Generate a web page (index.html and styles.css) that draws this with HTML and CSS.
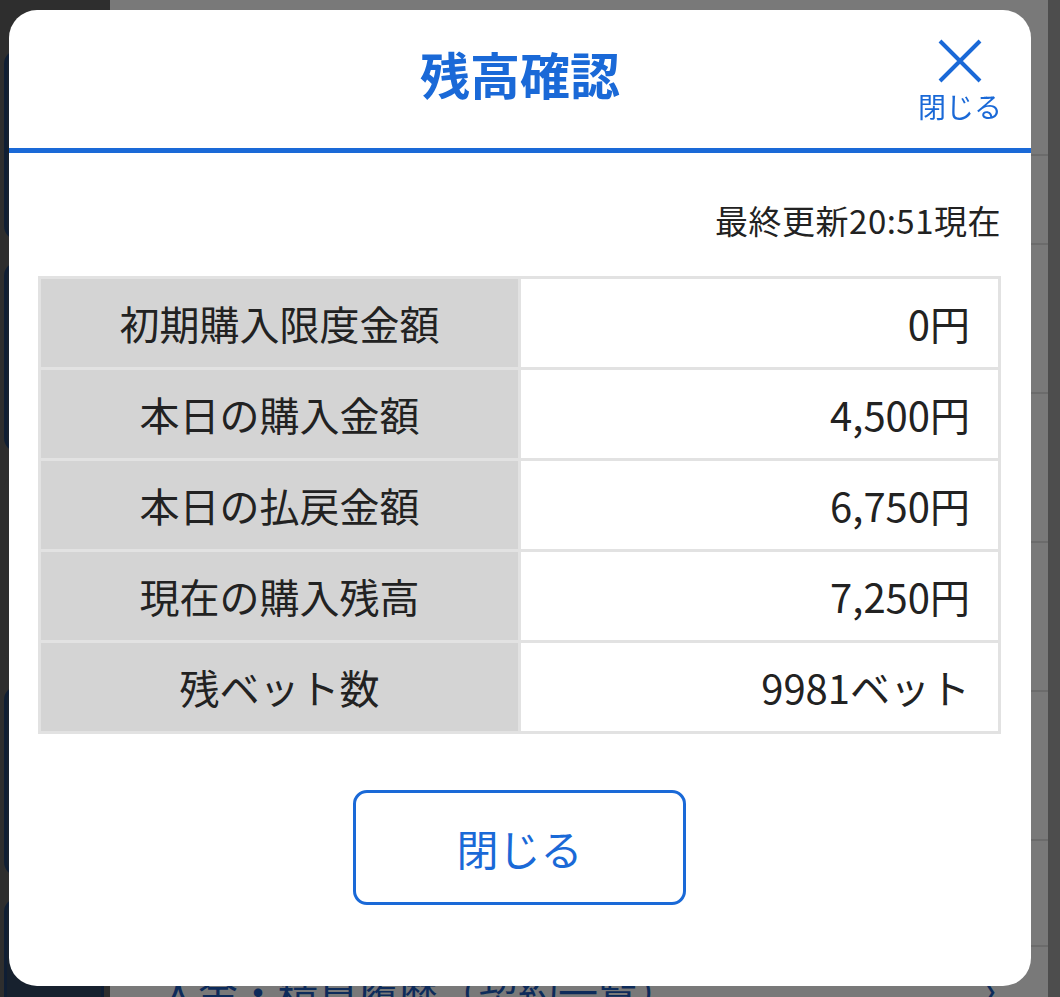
FILE: index.html
```html
<!DOCTYPE html>
<html lang="ja">
<head>
    <meta charset="UTF-8">
    <meta name="viewport" content="width=device-width, initial-scale=1.0">
    <title>残高確認</title>
    <link rel="stylesheet" href="styles.css">
</head>
<body>
    <div class="page">
        <aside class="side">
            <div class="side-btn"></div>
            <div class="side-btn"></div>
            <div class="side-btn plain"></div>
            <div class="side-btn"></div>
            <div class="side-btn"></div>
        </aside>
        <main class="list">
            <div class="list-head"></div>
            <div class="list-row short"></div>
            <div class="list-row"></div>
            <div class="list-row"></div>
            <div class="list-row"></div>
            <div class="list-row"></div>
            <div class="list-row mid"></div>
            <div class="list-row link">
                <span>入金・精算履歴（契約一覧）</span>
                <span class="chev">〉</span>
            </div>
        </main>
        <div class="scroll"></div>
    </div>

    <div class="overlay">
        <section class="modal">
            <header class="modal-head">
                <h1 class="modal-title">残高確認</h1>
                <button class="close-x" type="button">
                    <svg width="44" height="44" viewBox="0 0 44 44">
                        <path d="M2 2 L42 42 M42 2 L2 42" stroke="currentColor" stroke-width="4" fill="none"/>
                    </svg>
                    <span>閉じる</span>
                </button>
            </header>

            <div class="modal-body">
                <p class="updated">最終更新20:51現在</p>

                <table class="balance">
                    <tr>
                        <th>初期購入限度金額</th>
                        <td>0円</td>
                    </tr>
                    <tr>
                        <th>本日の購入金額</th>
                        <td>4,500円</td>
                    </tr>
                    <tr>
                        <th>本日の払戻金額</th>
                        <td>6,750円</td>
                    </tr>
                    <tr>
                        <th>現在の購入残高</th>
                        <td>7,250円</td>
                    </tr>
                    <tr>
                        <th>残ベット数</th>
                        <td>9981ベット</td>
                    </tr>
                </table>

                <button class="close-btn" type="button">閉じる</button>
            </div>
        </section>
    </div>
</body>
</html>
```

FILE: styles.css
```css
* {
    box-sizing: border-box;
}
body {
    margin: 0;
    height: 997px;
    overflow: hidden;
    font-family: "Noto Sans CJK JP", "Noto Sans", sans-serif;
    color: #222;
}

/* page behind the dialog */
.page {
    display: flex;
    height: 100%;
    overflow: hidden;
}
.side {
    width: 110px;
    background: #5c5c5c;
    display: flex;
    flex-direction: column;
    gap: 22px;
    padding: 50px 0 0 4px;
}
.side-btn {
    flex: none;
    width: 100px;
    height: 190px;
    border: 3px solid #1e3d68;
    border-radius: 14px;
    background: #2e435c;
}
.side-btn.plain {
    border-color: transparent;
    background: #5c5c5c;
}
.list {
    flex: 1;
    background: #f2f2f2;
}
.list-head {
    height: 156px;
    border-bottom: 2px solid #d6d6d6;
}
.list-row {
    height: 149px;
    border-bottom: 2px solid #d6d6d6;
}
.list-row.short {
    height: 89px;
}
.list-row.mid {
    height: 106px;
}
.list-row.link {
    display: flex;
    justify-content: space-between;
    align-items: flex-start;
    padding: 20px 30px 0 48px;
    color: #1b56b4;
    font-size: 40px;
    line-height: 1.2;
    border: none;
}
.scroll {
    width: 12px;
    background: #9a9a9a;
}

/* dialog */
.overlay {
    position: fixed;
    inset: 0;
    background: rgba(0, 0, 0, 0.5);
    padding: 10px 29px 0 9px;
}
.modal {
    background: #fff;
    border-radius: 28px;
    padding-bottom: 81px;
}
.modal-head {
    position: relative;
    height: 143px;
    padding-bottom: 12px;
    border-bottom: 5px solid #1a69d7;
    display: flex;
    align-items: center;
    justify-content: center;
}
.modal-title {
    margin: 0;
    font-size: 50px;
    font-weight: bold;
    color: #1a69d7;
    line-height: 1;
}
.close-x {
    position: absolute;
    top: 29px;
    right: 29px;
    display: flex;
    flex-direction: column;
    align-items: center;
    gap: 7px;
    padding: 0;
    border: none;
    background: none;
    color: #1a69d7;
    font-family: inherit;
    font-size: 28px;
    line-height: 32px;
}
.close-x svg {
    display: block;
}
.modal-body {
    padding: 0 30px 0 29px;
    display: flex;
    flex-direction: column;
}
.updated {
    margin: 44px 0 33px;
    height: 46px;
    line-height: 46px;
    text-align: right;
    font-size: 33px;
    letter-spacing: 0.5px;
}
.balance {
    width: 100%;
    border-spacing: 3px;
    background: #e2e2e2;
    table-layout: fixed;
}
.balance th,
.balance td {
    height: 88px;
    padding: 0 28px;
    font-size: 40px;
    font-weight: normal;
}
.balance th {
    background: #d4d4d4;
    text-align: center;
}
.balance td {
    background: #fff;
    text-align: right;
}
.close-btn {
    align-self: center;
    margin-top: 56px;
    width: 333px;
    height: 115px;
    border: 3px solid #1a69d7;
    border-radius: 14px;
    background: #fff;
    color: #1a69d7;
    font-family: inherit;
    font-size: 42px;
    cursor: pointer;
}
```
